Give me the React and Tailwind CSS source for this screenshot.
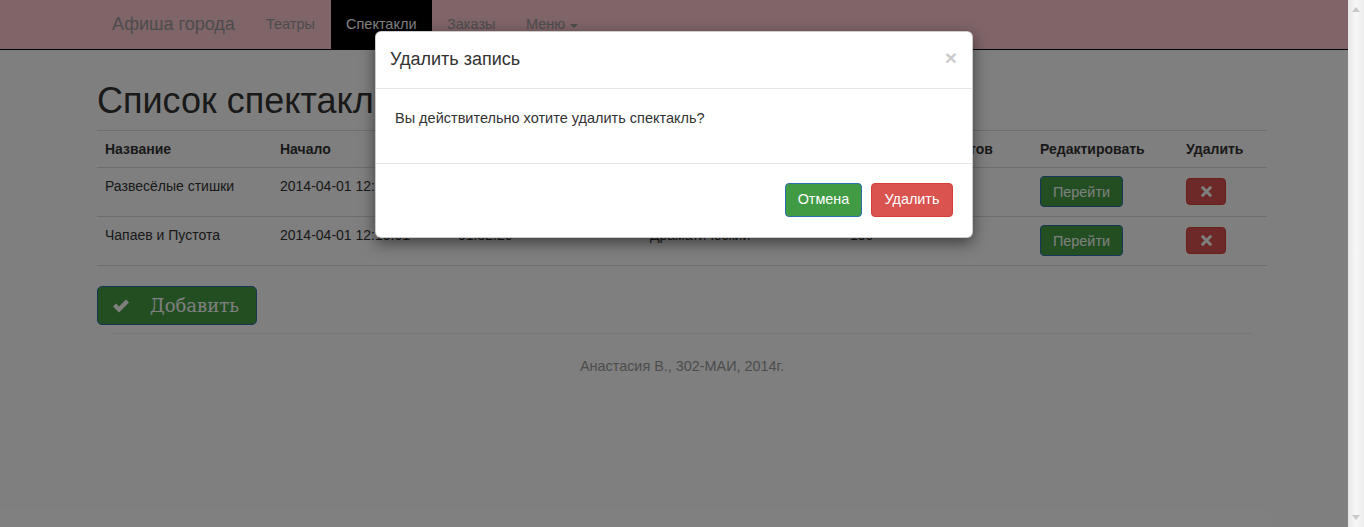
import React from "react";

const cols = "grid grid-cols-[175px_178px_192px_200px_190px_146px_89px]";

function RemoveIcon() {
  return (
    <svg width="11" height="11" viewBox="0 0 12 12">
      <path d="M2 2 L10 10 M10 2 L2 10" stroke="#fff" strokeWidth="3.2" strokeLinecap="square" />
    </svg>
  );
}

function CheckIcon() {
  return (
    <svg width="18" height="16" viewBox="0 0 18 16">
      <path d="M1 8.5 L4 5.5 L7 8.5 L14 1.5 L17 4.5 L7 14.5 Z" fill="#fff" />
    </svg>
  );
}

function Row({ name, start, dur, genre, count }) {
  return (
    <div className={`${cols} h-[49px] border-b border-[#dddddd] text-[14px] leading-[20px] text-[#333]`}>
      <div className="px-[8px] pt-[8px]">{name}</div>
      <div className="px-[8px] pt-[8px]">{start}</div>
      <div className="px-[8px] pt-[8px]">{dur}</div>
      <div className="px-[8px] pt-[8px]">{genre}</div>
      <div className="px-[8px] pt-[8px]">{count}</div>
      <div className="px-[8px] pt-[8px]">
        <div className="flex h-[31px] w-[83px] items-center justify-center rounded-[4px] border border-[#2c6fad] bg-[#449d44] text-[14.4px] text-white">
          Перейти
        </div>
      </div>
      <div className="px-[8px] pt-[10px]">
        <div className="flex h-[27px] w-[40px] items-center justify-center rounded-[4px] border border-[#d43f3a] bg-[#d9534f]">
          <RemoveIcon />
        </div>
      </div>
    </div>
  );
}

export default function App() {
  return (
    <div className="flex h-[527px] w-[1364px] overflow-hidden font-['Liberation_Sans',Arial,sans-serif]">
      <div className="relative flex-1 bg-white">
        {/* Navbar */}
        <div className="flex h-[50px] items-stretch border-b border-black bg-[#ffc8d0] pl-[97px]">
          <div className="flex w-[154px] items-center px-[15px] text-[18px] text-[#999]">Афиша города</div>
          <div className="flex w-[80px] items-center px-[15px] text-[14.5px] text-[#999]">Театры</div>
          <div className="flex w-[101px] items-center bg-black px-[15px] text-[14.5px] text-white">Спектакли</div>
          <div className="flex w-[79px] items-center px-[15px] text-[14.5px] text-[#999]">Заказы</div>
          <div className="flex items-center px-[15px] text-[14.5px] text-[#999]">
            Меню
            <span className="ml-[5px] mt-[2px] h-0 w-0 border-x-[4px] border-t-[4px] border-x-transparent border-t-[#999]" />
          </div>
        </div>

        {/* Content */}
        <div className="ml-[97px] w-[1170px]">
          <h1 className="mt-[31px] mb-[9px] text-[36px] leading-[40px] font-normal text-[#333]">Список спектаклей</h1>
          <div className="border-t border-[#dddddd]">
            <div className={`${cols} h-[37px] border-b border-[#dddddd] text-[14px] leading-[20px] font-bold text-[#333]`}>
              <div className="px-[8px] pt-[8px]">Название</div>
              <div className="px-[8px] pt-[8px]">Начало</div>
              <div className="px-[8px] pt-[8px]">Продолжительность</div>
              <div className="px-[8px] pt-[8px]">Жанр</div>
              <div className="px-[8px] pt-[8px] whitespace-nowrap">Количество билетов</div>
              <div className="px-[8px] pt-[8px]">Редактировать</div>
              <div className="px-[8px] pt-[8px]">Удалить</div>
            </div>
            <Row name="Развесёлые стишки" start="2014-04-01 12:10:01" dur="01:15:00" genre="Комедия" count="120" />
            <Row name="Чапаев и Пустота" start="2014-04-01 12:10:01" dur="01:32:20" genre="Драматический" count="100" />
          </div>

          <div className="mt-[20px] flex h-[39px] w-[160px] items-center rounded-[5px] border border-[#2c6fad] bg-[#449d44] pl-[14px]">
            <CheckIcon />
            <span className="ml-[20px] font-['DejaVu_Serif',serif] text-[18px] text-white">Добавить</span>
          </div>

          <div className="mx-[15px] mt-[8px] border-t border-[#eeeeee]" />
          <div className="mt-[22px] text-center text-[14.4px] leading-[20px] text-[#999]">Анастасия В., 302-МАИ, 2014г.</div>
        </div>

        {/* Overlay */}
        <div className="absolute inset-0 bg-black/50" />

        {/* Modal */}
        <div className="absolute left-[375px] top-[31px] w-[598px] rounded-[6px] border border-black/20 bg-white shadow-[0_5px_15px_rgba(0,0,0,0.5)]">
          <div className="flex h-[57px] items-start justify-between border-b border-[#e5e5e5] pl-[14px] pr-[15px] pt-[14px]">
            <div className="text-[18px] leading-[26px] text-[#333]">Удалить запись</div>
            <div className="mt-[-1px] text-[21px] font-bold leading-[26px] text-[#cccccc]">×</div>
          </div>
          <div className="h-[75px] border-b border-[#e5e5e5] pl-[19px] pr-[20px] pt-[19px] text-[14.5px] leading-[20px] text-[#333]">
            Вы действительно хотите удалить спектакль?
          </div>
          <div className="flex justify-end gap-[9px] px-[19px] pt-[19px] pb-[20px]">
            <div className="flex h-[34px] w-[77px] items-center justify-center rounded-[4px] border border-[#2c6fad] bg-[#419b45] text-[14.4px] text-white">
              Отмена
            </div>
            <div className="flex h-[34px] w-[82px] items-center justify-center rounded-[4px] border border-[#d43f3a] bg-[#d9534f] text-[14.4px] text-white">
              Удалить
            </div>
          </div>
        </div>
      </div>

      {/* Scrollbar */}
      <div className="flex w-[16px] flex-col items-center justify-between bg-gradient-to-r from-[#e6e6e6] via-[#f7f7f7] to-[#ececec] py-[7px]">
        <span className="h-0 w-0 border-x-[4px] border-b-[5px] border-x-transparent border-b-[#c8c8c8]" />
        <span className="h-0 w-0 border-x-[4px] border-t-[5px] border-x-transparent border-t-[#c8c8c8]" />
      </div>
    </div>
  );
}
